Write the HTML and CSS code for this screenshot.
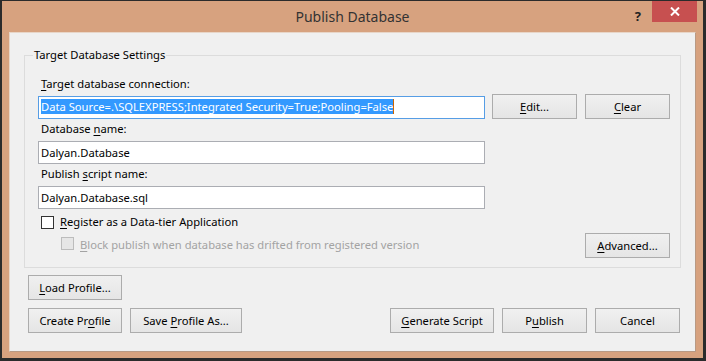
FILE: index.html
```html
<!DOCTYPE html>
<html lang="en">
<head>
    <meta charset="UTF-8">
    <title>Publish Database</title>
    <link rel="stylesheet" href="styles.css">
</head>
<body>
    <div class="window">
        <!-- Barra de título -->
        <div class="titlebar">
            <div class="title">Publish Database</div>
            <div class="help">?</div>
            <div class="close">
                <svg width="10" height="9" viewBox="0 0 10 9">
                    <path d="M1 0.5 L9 8.5 M9 0.5 L1 8.5" stroke="#fff" stroke-width="2"/>
                </svg>
            </div>
        </div>

        <div class="client">
            <fieldset class="group">
                <legend>Target Database Settings</legend>

                <div class="label"><u>T</u>arget database connection:</div>
                <div class="conn-row">
                    <div class="textbox focused"><span class="sel">Data Source=.\SQLEXPRESS;Integrated Security=True;Pooling=False</span></div>
                    <button><u>E</u>dit...</button>
                    <button><u>C</u>lear</button>
                </div>

                <div class="label gap-top">Database <u>n</u>ame:</div>
                <div class="textbox field">Dalyan.Database</div>

                <div class="label gap-top">Publish <u>s</u>cript name:</div>
                <div class="textbox field">Dalyan.Database.sql</div>

                <div class="check-row">
                    <span class="box"></span>
                    <span><u>R</u>egister as a Data-tier Application</span>
                </div>
                <div class="check-row sub">
                    <span class="box disabled"></span>
                    <span class="muted"><u>B</u>lock publish when database has drifted from registered version</span>
                    <button class="push-right"><u>A</u>dvanced...</button>
                </div>
            </fieldset>

            <div class="profile-row">
                <button class="wide"><u>L</u>oad Profile...</button>
            </div>
            <div class="footer">
                <button class="wide">Create Pr<u>o</u>file</button>
                <button class="save">Save <u>P</u>rofile As...</button>
                <button class="generate push-right"><u>G</u>enerate Script</button>
                <button>P<u>u</u>blish</button>
                <button>Cancel</button>
            </div>
        </div>
    </div>
</body>
</html>
```

FILE: styles.css
```css
body {
    margin: 0;
    background: #2b2b2b;
    font-family: "Segoe UI", "Noto Sans", sans-serif;
    font-size: 11.2px;
    color: #000;
}
u {
    text-decoration-thickness: 1px;
    text-underline-offset: 2px;
}
.window {
    margin: 1px 3px 0 2px;
    height: 357px;
    background: #d7a27f;
    padding: 0 7px 6px 7px;
    box-sizing: border-box;
}
.titlebar {
    height: 31px;
    display: flex;
    align-items: flex-start;
    justify-content: flex-end;
    position: relative;
}
.title {
    position: absolute;
    left: 0;
    right: 0;
    top: 6px;
    text-align: center;
    font-size: 14px;
    color: #333;
}
.help {
    margin-top: 6px;
    margin-right: 11px;
    font-weight: bold;
    font-size: 13px;
    color: #222;
}
.close {
    width: 45px;
    height: 21px;
    margin-right: -1px;
    background: #c75050;
    display: flex;
    align-items: center;
    justify-content: center;
    position: relative;
}
.client {
    height: 320px;
    box-sizing: border-box;
    background: #f0f0f0;
    border: 1px solid #b99a84;
    border-top-color: #e8d6c8;
    border-left-color: #e8d6c8;
    padding: 14px 14px 0 14px;
}
.group {
    margin: 0;
    border: 1px solid #dcdcdc;
    padding: 13px 10px 8px 13px;
    height: 221px;
    box-sizing: border-box;
}
.group legend {
    padding: 0 1px;
    margin-left: -5px;
    line-height: 16px;
}
.label {
    line-height: 16px;
    padding-left: 3px;
}
.gap-top {
    margin-top: 2px;
}
.conn-row {
    display: flex;
    align-items: flex-end;
    gap: 8px;
    margin-top: 2px;
}
.conn-row .textbox {
    margin-right: -1px;
}
.textbox {
    width: 447px;
    height: 23px;
    box-sizing: border-box;
    background: #fff;
    border: 1px solid #abadb3;
    padding: 3px 2px 0 2px;
    line-height: 15px;
    white-space: nowrap;
}
.field {
    margin-top: 4px;
}
.focused {
    border-color: #569de5;
    padding-top: 2px;
}
.sel {
    display: inline-block;
    background: #3399ff;
    color: #fff;
    border-right: 1px solid #cc6600;
    line-height: 15px;
}
button {
    width: 85px;
    height: 25px;
    padding: 0;
    border: 1px solid #acacac;
    background: linear-gradient(#f0f0f0, #e5e5e5);
    font-family: inherit;
    font-size: 11.2px;
    color: #000;
}
.check-row {
    display: flex;
    align-items: flex-start;
    gap: 6px;
    line-height: 16px;
    margin-top: 5px;
    padding-left: 3px;
}
.check-row .box {
    width: 13px;
    height: 13px;
    box-sizing: border-box;
    margin-top: 2px;
    background: #fff;
    border: 1px solid #333;
}
.check-row.sub {
    margin-top: 3px;
    padding-left: 23px;
}
.check-row.sub .box,
.check-row.sub .muted {
    margin-top: 4px;
}
.box.disabled {
    background: #e6e6e6;
    border-color: #bcbcbc;
}
.muted {
    color: #a3a3a3;
}
.push-right {
    margin-left: auto;
}
.profile-row {
    margin-top: 7px;
    padding-left: 4px;
}
.wide {
    width: 94px;
}
.save {
    width: 112px;
}
.generate {
    width: 104px;
}
.footer {
    display: flex;
    gap: 8px;
    margin-top: 8px;
    padding: 0 1px 0 4px;
}
```
